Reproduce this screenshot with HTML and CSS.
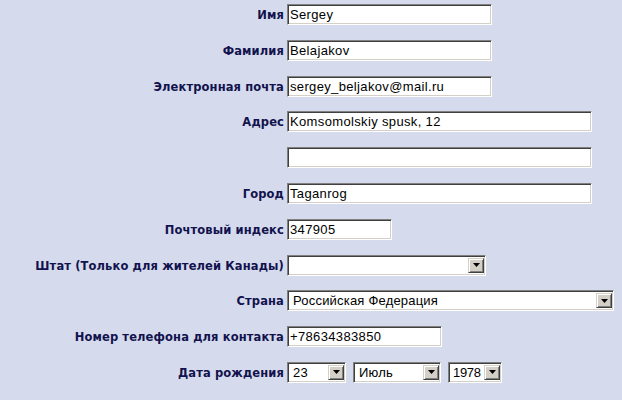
FILE: index.html
```html
<!DOCTYPE html>
<html lang="ru">
<head>
<meta charset="utf-8">
<link rel="stylesheet" href="styles.css">
</head>
<body>
<form class="form">
  <label class="lbl">Имя</label>
  <div class="fld"><input class="inp w205" value="Sergey"></div>

  <label class="lbl">Фамилия</label>
  <div class="fld"><input class="inp w205" value="Belajakov"></div>

  <label class="lbl">Электронная почта</label>
  <div class="fld"><input class="inp w205" value="sergey_beljakov@mail.ru"></div>

  <label class="lbl">Адрес</label>
  <div class="fld"><input class="inp w305" value="Komsomolskiy spusk, 12"></div>

  <label class="lbl"></label>
  <div class="fld"><input class="inp w305" value=""></div>

  <label class="lbl">Город</label>
  <div class="fld"><input class="inp w305" value="Taganrog"></div>

  <label class="lbl">Почтовый индекс</label>
  <div class="fld"><input class="inp w105" value="347905"></div>

  <label class="lbl">Штат (Только для жителей Канады)</label>
  <div class="fld">
    <div class="sel w199"><span class="val"></span><span class="btn"><svg width="7" height="4" viewBox="0 0 7 4"><path d="M0 0h7L3.5 4z" fill="#000"/></svg></span></div>
  </div>

  <label class="lbl">Страна</label>
  <div class="fld">
    <div class="sel w327"><span class="val">Российская Федерация</span><span class="btn"><svg width="7" height="4" viewBox="0 0 7 4"><path d="M0 0h7L3.5 4z" fill="#000"/></svg></span></div>
  </div>

  <label class="lbl">Номер телефона для контакта</label>
  <div class="fld"><input class="inp w155" value="+78634383850"></div>

  <label class="lbl">Дата рождения</label>
  <div class="fld date">
    <div class="sel w59"><span class="val">23</span><span class="btn"><svg width="7" height="4" viewBox="0 0 7 4"><path d="M0 0h7L3.5 4z" fill="#000"/></svg></span></div>
    <div class="sel w88"><span class="val">Июль</span><span class="btn"><svg width="7" height="4" viewBox="0 0 7 4"><path d="M0 0h7L3.5 4z" fill="#000"/></svg></span></div>
    <div class="sel w54"><span class="val">1978</span><span class="btn"><svg width="7" height="4" viewBox="0 0 7 4"><path d="M0 0h7L3.5 4z" fill="#000"/></svg></span></div>
  </div>
</form>
</body>
</html>
```

FILE: styles.css
```css
html, body {
  margin: 0;
  padding: 0;
  background: #d5dbec;
}

.form {
  display: grid;
  grid-template-columns: 284px auto;
  grid-auto-rows: 21px;
  row-gap: 14.8px;
  column-gap: 3px;
  padding-top: 4px;
  align-items: center;
}

.lbl {
  font-family: "DejaVu Sans", Verdana, sans-serif;
  font-weight: bold;
  font-size: 11.5px;
  letter-spacing: 0.12px;
  color: #12124e;
  text-align: right;
  white-space: nowrap;
  padding-top: 1px;
}

.fld {
  display: flex;
  align-items: center;
  height: 21px;
}

.date {
  gap: 7px;
}

.inp {
  box-sizing: border-box;
  height: 21px;
  margin: 0;
  padding: 0 2px 0 2px;
  font-family: "Liberation Sans", Arial, sans-serif;
  font-size: 13px;
  letter-spacing: 0.35px;
  color: #000;
  background: #fff;
  border-top: 1px solid #808080;
  border-left: 1px solid #808080;
  border-right: 1px solid #ffffff;
  border-bottom: 1px solid #ffffff;
  box-shadow: inset 1px 1px 0 #404040, inset -1px -1px 0 #d4d0c8;
  outline: none;
}

.w105 { width: 105px; }
.w155 { width: 155px; }
.w205 { width: 205px; }
.w305 { width: 305px; }
.w199 { width: 199px; }
.w327 { width: 327px; }
.w59 { width: 59px; }
.w88 { width: 88px; }
.w54 { width: 54px; }

.sel {
  box-sizing: border-box;
  height: 21px;
  display: flex;
  align-items: stretch;
  background: #fff;
  border-top: 1px solid #808080;
  border-left: 1px solid #808080;
  border-right: 1px solid #ffffff;
  border-bottom: 1px solid #ffffff;
  box-shadow: inset 1px 1px 0 #404040, inset -1px -1px 0 #d4d0c8;
  padding: 2px 1px 2px 1px;
}

.val {
  flex: 1;
  font-family: "Liberation Sans", Arial, sans-serif;
  font-size: 13px;
  letter-spacing: 0.2px;
  line-height: 16px;
  color: #000;
  padding-left: 4px;
  white-space: nowrap;
  overflow: hidden;
}

.w54 .val {
  padding-left: 3px;
  letter-spacing: -0.3px;
}

.btn {
  box-sizing: border-box;
  width: 16px;
  flex: none;
  display: flex;
  align-items: center;
  justify-content: center;
  background: #d4d0c8;
  border-top: 1px solid #d4d0c8;
  border-left: 1px solid #d4d0c8;
  border-right: 1px solid #404040;
  border-bottom: 1px solid #404040;
  box-shadow: inset 1px 1px 0 #ffffff, inset -1px -1px 0 #808080;
}

.btn svg {
  display: block;
}
```
